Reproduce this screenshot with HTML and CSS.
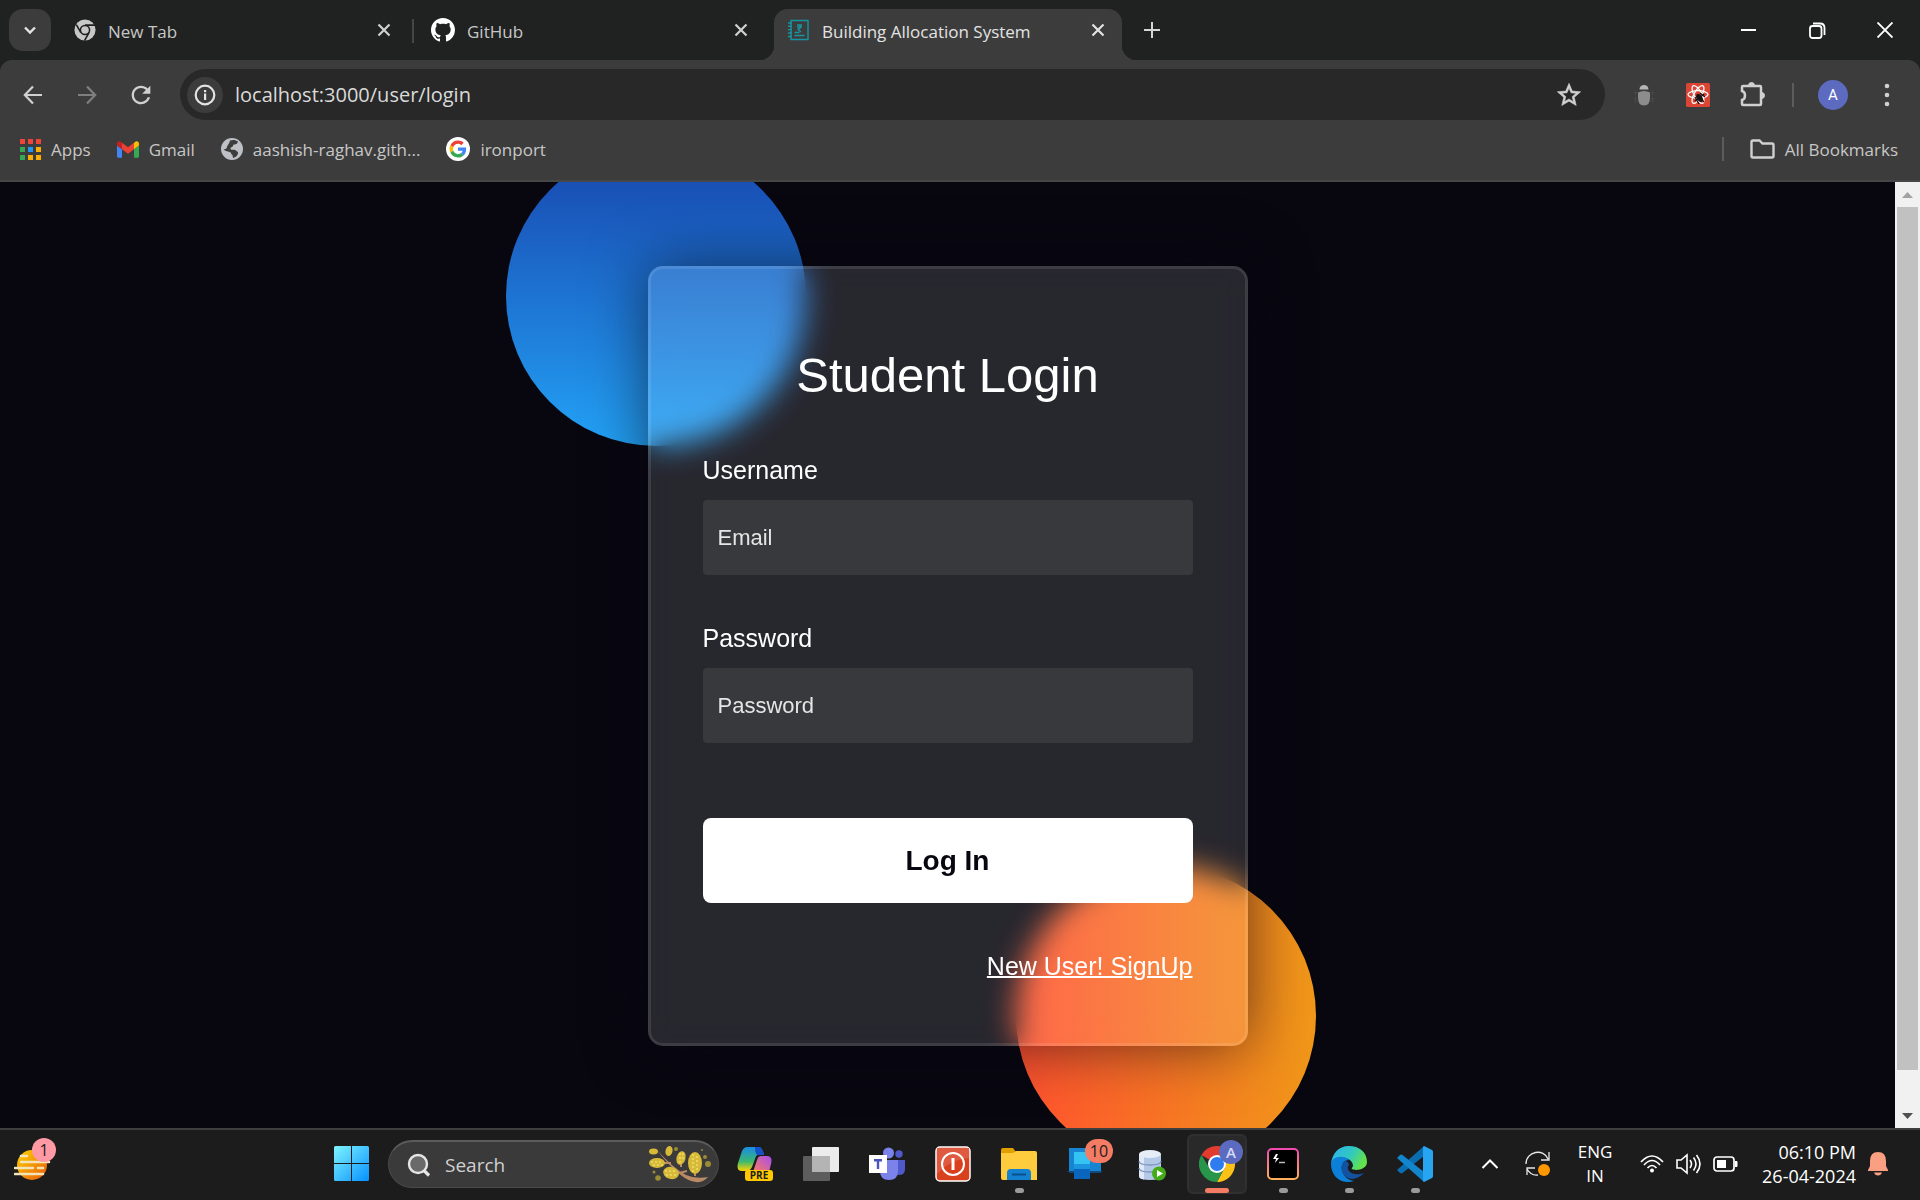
FILE: index.html
```html
<!DOCTYPE html>
<html lang="en">
<head>
<meta charset="utf-8">
<title>Building Allocation System</title>
<link rel="stylesheet" href="styles.css">
</head>
<body>
<div class="desktop">
  <header class="browser">
    <div class="tab-strip">
      <button class="tab-search" aria-label="Search tabs"><svg width="18" height="18" viewBox="0 0 18 18" fill="none" stroke="#e3e3e3" stroke-width="2.400"><path d="M4 6.500l5 5 5-5"/></svg></button>
      <div class="tab">
        <svg width="22" height="22" viewBox="0 0 24 24"><circle cx="12" cy="12" r="11.500" fill="#c7c7c7"/><circle cx="12" cy="12" r="5" fill="none" stroke="#202221" stroke-width="1.700"/><path d="M12 6.700h11M7.500 14.800L2.500 6.200M16.500 14.600L11.500 23.500" stroke="#202221" stroke-width="1.800"/></svg>
        <span class="tab-title">New Tab</span>
        <button class="icon-button close" aria-label="Close New Tab"><svg width="14" height="14" viewBox="0 0 14 14" stroke="#d0d0d0" stroke-width="2.200"><path d="M1.500 1.500l11 11M12.500 1.500l-11 11"/></svg></button>
      </div>
      <div class="tab divided">
        <svg width="24" height="24" viewBox="0 0 16 16" fill="#fff"><path d="M8 0C3.580 0 0 3.580 0 8c0 3.540 2.290 6.530 5.470 7.590.4.070.55-.17.55-.38 0-.19-.01-.82-.01-1.490-2.010.37-2.530-.49-2.690-.94-.09-.23-.48-.94-.82-1.130-.28-.15-.68-.52-.01-.53.63-.01 1.080.58 1.230.82.72 1.210 1.870.87 2.330.66.07-.52.28-.87.51-1.070-1.780-.2-3.640-.89-3.640-3.950 0-.87.31-1.590.82-2.150-.08-.2-.36-1.020.08-2.120 0 0 .67-.21 2.200.82.64-.18 1.320-.27 2-.27s1.360.09 2 .27c1.530-1.040 2.200-.82 2.200-.82.44 1.100.16 1.920.08 2.120.51.56.82 1.270.82 2.150 0 3.070-1.870 3.750-3.650 3.950.29.25.54.73.54 1.480 0 1.070-.01 1.930-.01 2.200 0 .21.15.46.55.38A8.010 8.010 0 0 0 16 8c0-4.420-3.580-8-8-8z"/></svg>
        <span class="tab-title">GitHub</span>
        <button class="icon-button close" aria-label="Close GitHub"><svg width="14" height="14" viewBox="0 0 14 14" stroke="#d0d0d0" stroke-width="2.200"><path d="M1.500 1.500l11 11M12.500 1.500l-11 11"/></svg></button>
      </div>
      <div class="tab active">
        <svg width="22" height="22" viewBox="0 0 22 22" fill="none" stroke="#1695a0" stroke-width="1.400"><path d="M3 1.500h17v19H3z"/><path d="M0 4h4M0 7.300h4M0 10.600h4M0 14h4M0 17.500h4M9 6h5M9 8h5M10 10c3 0 3-4 1-4M9.500 10l3.500 3M6.500 13.500h5M6.500 16.500h10"/></svg>
        <span class="tab-title">Building Allocation System</span>
        <button class="icon-button close" aria-label="Close Building Allocation System"><svg width="14" height="14" viewBox="0 0 14 14" stroke="#e3e3e3" stroke-width="2.200"><path d="M1.500 1.500l11 11M12.500 1.500l-11 11"/></svg></button>
      </div>
      <button class="new-tab icon-button" aria-label="New tab"><svg width="16" height="16" viewBox="0 0 16 16" stroke="#d5d5d5" stroke-width="2"><path d="M8 0v16M0 8h16"/></svg></button>
      <div class="window-controls">
        <button class="icon-button" aria-label="Minimize"><svg width="16" height="16" viewBox="0 0 16 16"><path d="M0 7h15v2H0z" fill="#fff"/></svg></button>
        <button class="icon-button" aria-label="Restore"><svg width="17" height="17" viewBox="0 0 17 17" fill="none" stroke="#fff" stroke-width="1.800"><rect x="1" y="4" width="11.500" height="12" rx="2.500"/><path d="M4 1.500h7c3 0 4.500 1.500 4.500 4.500v7"/></svg></button>
        <button class="icon-button" aria-label="Close window"><svg width="16" height="16" viewBox="0 0 16 16" stroke="#fff" stroke-width="1.900"><path d="M.5.500l15 15M15.500.500l-15 15"/></svg></button>
      </div>
    </div>
    <div class="chrome-body">
      <div class="toolbar">
        <button class="tool" aria-label="Back"><svg width="20" height="20" viewBox="0 0 20 20" fill="none" stroke="#d0d0d0" stroke-width="2.200"><path d="M19 10H2M10 1.500L1.800 10l8.200 8.500"/></svg></button>
        <button class="tool" aria-label="Forward"><svg width="20" height="20" viewBox="0 0 20 20" fill="none" stroke="#7f7f7f" stroke-width="2.200"><path d="M1 10h17M10 1.500l8.200 8.500-8.200 8.500"/></svg></button>
        <button class="tool" aria-label="Reload"><svg width="28" height="28" viewBox="0 0 24 24" fill="#d0d0d0"><path d="M17.650 6.350C16.200 4.900 14.210 4 12 4c-4.420 0-7.990 3.580-7.990 8s3.570 8 7.990 8c3.730 0 6.840-2.550 7.730-6h-2.080c-.82 2.330-3.040 4-5.650 4-3.310 0-6-2.690-6-6s2.690-6 6-6c1.660 0 3.140.69 4.220 1.780L13 11h7V4l-2.350 2.350z"/></svg></button>
        <div class="omnibox">
          <button class="site-info" aria-label="View site information"><svg width="22" height="22" viewBox="0 0 22 22"><circle cx="11" cy="11" r="9.300" fill="none" stroke="#e3e3e3" stroke-width="2.200"/><path d="M10 9.500h2.200V16H10zM10 6h2.200v2.200H10z" fill="#e3e3e3"/></svg></button>
          <input class="address" type="text" aria-label="Address" value="localhost:3000/user/login">
          <button class="icon-button" aria-label="Bookmark this tab"><svg width="28" height="28" viewBox="0 0 24 24" fill="#d0d0d0" stroke="#d0d0d0" stroke-width=".5"><path d="M22 9.240l-7.190-.62L12 2 9.190 8.630 2 9.240l5.460 4.730L5.820 21 12 17.270 18.180 21l-1.630-7.030L22 9.240zM12 15.400l-3.760 2.270 1-4.280-3.320-2.880 4.380-.38L12 6.100l1.710 4.040 4.380.38-3.320 2.880 1 4.280L12 15.400z"/></svg></button>
        </div>
        <button class="tool" aria-label="Debugger extension"><svg width="22" height="24" viewBox="0 0 22 24"><path d="M6.500 6.500a4.500 4.500 0 0 1 9 0z" fill="#b5b5b5"/><path d="M5 9.500q6-3 12 0v5q0 8-6 8t-6-8z" fill="#8c8c8c"/><path d="M2.500 9v3M2.500 15v4M19.500 9v3M19.500 15v4" stroke="#5c5c5c" stroke-width="1.500" stroke-dasharray="1 1.500"/></svg></button>
        <button class="tool" aria-label="React developer tools"><svg width="24" height="24" viewBox="0 0 24 24"><rect width="24" height="24" rx="1.500" fill="#dc4433"/><g fill="none" stroke="#fff" stroke-width="1.300"><ellipse cx="12" cy="11.500" rx="10" ry="3.800"/><ellipse cx="12" cy="11.500" rx="10" ry="3.800" transform="rotate(60 12 11.500)"/><ellipse cx="12" cy="11.500" rx="10" ry="3.800" transform="rotate(120 12 11.500)"/></g><path d="M11 11l7 8M9 14l4 7M14 10l5 4M9 18l9-7" stroke="#1c1414" stroke-width="1.300"/><ellipse cx="13.500" cy="15" rx="2.800" ry="4.200" transform="rotate(-35 13.500 15)" fill="#1c1414"/></svg></button>
        <button class="tool" aria-label="Extensions"><svg width="26" height="26" viewBox="0 0 26 26" fill="none" stroke="#d0d0d0" stroke-width="2.500"><path d="M4 4h17q1 0 1 1v17q0 1-1 1H4q-1 0-1-1v-4c4-1 4-8 0-9V5q0-1 1-1z"/><path d="M9.500 3.500a3 3 0 0 1 6 0zM22.500 10.500a3 3 0 0 1 0 6z" fill="#d0d0d0" stroke-width="1"/></svg></button>
        <span class="rule"></span>
        <button class="tool" aria-label="Profile"><span class="avatar">A</span></button>
        <button class="tool" aria-label="Menu"><svg width="6" height="26" viewBox="0 0 6 26" fill="#d0d0d0"><circle cx="3" cy="4" r="2.300"/><circle cx="3" cy="13" r="2.300"/><circle cx="3" cy="22" r="2.300"/></svg></button>
      </div>
      <nav class="bookmarks">
        <a href="#apps"><svg width="21" height="21" viewBox="0 0 21 21"><path d="M0 0h5v5H0zM8 0h5v5H8zM16 0h5v5h-5z" fill="#f04438"/><path d="M0 8h5v5H0zM0 16h5v5H0z" fill="#34a853"/><path d="M8 8h5v5H8z" fill="#2196f3"/><path d="M16 8h5v5h-5zM8 16h5v5H8zM16 16h5v5h-5z" fill="#fbaf05"/></svg>Apps</a>
        <a href="#gmail"><svg width="22" height="17" viewBox="52 42 88 66"><path fill="#4285f4" d="M58 108h14V74L52 59v43c0 3.320 2.690 6 6 6"/><path fill="#34a853" d="M120 108h14c3.320 0 6-2.690 6-6V59l-20 15"/><path fill="#fbbc04" d="M120 48v26l20-15v-8c0-7.420-8.470-11.650-14.400-7.200"/><path fill="#ea4335" d="M72 74V48l24 18 24-18v26L96 92"/><path fill="#c5221f" d="M52 51v8l20 15V48l-5.600-4.200c-5.940-4.450-14.400-.22-14.400 7.200"/></svg>Gmail</a>
        <a href="#site"><svg width="22" height="22" viewBox="0 0 22 22"><circle cx="11" cy="11" r="11" fill="#bdc1c6"/><path d="M9 2.500c3-1 6-.5 8 1-.5 2-1.500 3-3.500 3s-1 2-2.500 2.500-2 1.500-1 2.500 4-.5 5 1 2.500 1 2 3-2 4-5 4.500l-.5-3c-1.500-.5-1-2.500-3-3S3.500 13 2.500 11c1.500.5 3 0 3.500-2s2-2.500 3-6.500z" fill="#3c3c3c"/></svg>aashish-raghav.gith...</a>
        <a href="#ironport"><svg width="24" height="24" viewBox="0 0 24 24"><circle cx="12" cy="12" r="12" fill="#fff"/><g transform="translate(3.500 3.500) scale(.354)"><path fill="#ea4335" d="M24 9.500c3.540 0 6.710 1.220 9.210 3.600l6.850-6.850C35.900 2.380 30.470 0 24 0 14.620 0 6.510 5.380 2.560 13.220l7.980 6.190C12.430 13.720 17.740 9.500 24 9.500z"/><path fill="#4285f4" d="M46.980 24.550c0-1.570-.15-3.090-.38-4.550H24v9.020h12.940c-.58 2.960-2.260 5.480-4.780 7.180l7.730 6c4.510-4.180 7.090-10.360 7.090-17.650z"/><path fill="#fbbc05" d="M10.530 28.590c-.48-1.450-.76-2.990-.76-4.590s.27-3.140.76-4.590l-7.980-6.190C.92 16.460 0 20.120 0 24c0 3.880.92 7.540 2.560 10.780l7.970-6.190z"/><path fill="#34a853" d="M24 48c6.480 0 11.930-2.130 15.890-5.810l-7.730-6c-2.150 1.450-4.920 2.300-8.160 2.300-6.260 0-11.570-4.220-13.470-9.910l-7.980 6.190C6.510 42.620 14.620 48 24 48z"/></g></svg>ironport</a>
        <span class="rule push"></span>
        <a href="#bookmarks"><svg width="25" height="20" viewBox="0 0 25 20" fill="none" stroke="#d0d0d0" stroke-width="2.400"><path d="M3 1.500h6.500l3 3H22q1.500 0 1.500 1.500v11q0 1.500-1.500 1.500H3q-1.500 0-1.500-1.500V3Q1.500 1.500 3 1.500z"/></svg>All Bookmarks</a>
      </nav>
    </div>
  </header>

  <div class="viewport">
    <main class="page">
      <div class="stage">
        <div class="shape blue"></div>
        <div class="shape orange"></div>
        <form class="login">
          <h1>Student Login</h1>
          <label for="username">Username</label>
          <input id="username" type="text" placeholder="Email">
          <label for="password">Password</label>
          <input id="password" type="password" placeholder="Password">
          <button type="button">Log In</button>
          <a href="#signup">New User! SignUp</a>
        </form>
      </div>
    </main>
    <div class="scrollbar">
      <svg width="25" height="25" viewBox="0 0 25 25"><path d="M7 16h11l-5.500-6z" fill="#a3a3a3"/></svg>
      <div class="thumb"></div>
      <div class="track-rest"></div>
      <svg width="25" height="25" viewBox="0 0 25 25"><path d="M7 10h11l-5.500 6z" fill="#505050"/></svg>
    </div>
  </div>

  <footer class="taskbar">
    <button class="widgets" aria-label="Widgets"><svg width="38" height="34" viewBox="0 0 38 34"><defs><linearGradient id="sun" x1="0" y1="0" x2="1" y2="1"><stop offset="0" stop-color="#ffd400"/><stop offset="1" stop-color="#e8590c"/></linearGradient></defs><circle cx="18" cy="17" r="15" fill="url(#sun)"/><path d="M7 8h6M7 14h28M1 20h18M24 20h5M1 26h28" stroke="#f5e3b8" stroke-width="2.600" stroke-linecap="round"/></svg><span class="badge pink">1</span></button>
    <div class="dock">
      <button class="app" aria-label="Start"><svg width="36" height="36" viewBox="0 0 36 36"><defs><linearGradient id="win" x1="0" y1="0" x2="1" y2="1"><stop offset="0" stop-color="#7ff5ff"/><stop offset="1" stop-color="#0690ff"/></linearGradient></defs><path d="M1.500 0H17v17H0V1.500Q0 0 1.500 0zM18 0h15.500Q35 0 35 1.500V17H18zM0 18h17v17H1.500Q0 35 0 33.500zM18 18h17v15.500q0 1.500-1.500 1.500H18z" fill="url(#win)"/></svg></button>
      <label class="search">
        <svg width="24" height="24" viewBox="0 0 24 24" fill="#6a6a6a" stroke="#e6e6e6" stroke-width="2.400"><path d="M16.500 17l5.500 5.500" stroke-width="3.200"/><circle cx="11" cy="11" r="9"/></svg>
        <input type="text" placeholder="Search" aria-label="Search">
        <svg width="62" height="38" viewBox="0 0 62 38"><path d="M8 4Q24 22 37 29q9 4 22 2-5 6-12 5-8-1-14-6Q20 20 8 4z" fill="#b98a64"/><path d="M14 17h8M30 27l8-2M32 21v-5M46 30v-5" stroke="#b98a64" stroke-width="2"/><g fill="#d6ba38"><ellipse cx="4.500" cy="5.500" rx="4.500" ry="3"/><ellipse cx="20" cy="5" rx="3.500" ry="5" transform="rotate(12 20 5)"/><ellipse cx="8" cy="17" rx="8" ry="5"/><ellipse cx="22" cy="27" rx="8" ry="6" transform="rotate(15 22 27)"/><ellipse cx="32" cy="12" rx="4.500" ry="7" transform="rotate(15 32 12)"/><ellipse cx="46" cy="17" rx="7" ry="11"/></g><g fill="none" stroke="#ecd968" stroke-width="2.200" stroke-linecap="round" stroke-dasharray="0 4"><path d="M3 16h12M5 19h9M17 25h12M18 29h9M44 9v17M48 11v16M31 8v10M34 8v8"/></g><g fill="#9b8b35"><circle cx="27" cy="3" r="2"/><circle cx="59" cy="18" r="3"/><circle cx="56" cy="11" r="2"/><circle cx="9" cy="32" r="2.800"/><circle cx="5" cy="26" r="1.500"/><circle cx="53" cy="4" r="1"/></g></svg>
      </label>
      <button class="app" aria-label="Copilot"><svg width="36" height="36" viewBox="0 0 36 36"><defs><linearGradient id="cpa" x1="0" y1="0" x2="0" y2="1"><stop offset="0" stop-color="#1a8be8"/><stop offset=".6" stop-color="#3ab870"/><stop offset="1" stop-color="#ffd400"/></linearGradient><linearGradient id="cpb" x1="1" y1="0" x2="0" y2="1"><stop offset="0" stop-color="#a44ff0"/><stop offset="1" stop-color="#ff7a5c"/></linearGradient></defs><path d="M10 1h12q3 0 5 8h-6q-2 0-3 4l-3 8q-2 4-5 4H5q-6 0-4-8L5 5q2-4 5-4z" fill="url(#cpa)"/><path d="M18 1h4q3 0 5 8h-6q-3 0-3-8z" fill="#1550c8"/><path d="M24 10h6q6 0 4 8l-2 8H16l4-12q1-4 4-4z" fill="url(#cpb)"/><rect x="8" y="24" width="28" height="11" rx="3" fill="#ffc800"/><text x="22" y="33" text-anchor="middle" class="pre">PRE</text></svg></button>
      <button class="app" aria-label="Task view"><svg width="36" height="36" viewBox="0 0 36 36"><rect x="9" y="1" width="27" height="25" rx="1" fill="#ececec"/><rect x="0" y="10" width="27" height="25" rx="1" fill="#5d5d5d"/><path d="M9 10h18v16H9z" fill="#b4b4b4"/></svg></button>
      <button class="app" aria-label="Teams"><svg width="36" height="36" viewBox="0 0 36 36"><circle cx="19.500" cy="7" r="5.500" fill="#7b83eb"/><circle cx="30" cy="8" r="3.700" fill="#5059c9"/><path d="M26 14h10v9q0 6-6 6-4 0-4-4z" fill="#5059c9"/><path d="M11 14h18v11q0 9-9 9t-9-9z" fill="#7b83eb"/><path d="M0 9h18v18H0z" fill="#fff"/><path d="M5 13h8v2.400h-2.800V23H7.800v-7.600H5z" fill="#4b53bc"/></svg></button>
      <button class="app" aria-label="Power"><svg width="36" height="36" viewBox="0 0 36 36"><rect x="1" y="1" width="34" height="34" rx="4" fill="#d9411e" stroke="#fff" stroke-width="1.500"/><path d="M2 2h32v10Q16 13 2 28z" fill="#e06048" opacity=".8"/><circle cx="18" cy="18" r="11" fill="none" stroke="#fff" stroke-width="2"/><path d="M16.500 12h3v12h-3z" fill="#fff"/></svg></button>
      <button class="app open" aria-label="File Explorer"><svg width="36" height="36" viewBox="0 0 36 36"><path d="M0 4q0-2 2-2h10l3 4v6H0z" fill="#e0a000"/><path d="M0 7h12l3-2h19q2 0 2 2v27H2q-2 0-2-2z" fill="#ffcc3d"/><path d="M6 34v-7q0-4 4-4h16q4 0 4 4v7z" fill="#1480d0"/><path d="M11 28.500h14" stroke="#0b4f8c" stroke-width="2"/></svg></button>
      <button class="app" aria-label="Phone Link"><svg width="36" height="36" viewBox="0 0 36 36"><path d="M2 2h32v23H2z" fill="#1684d0"/><path d="M0 25h36l-3 2H3z" fill="#114a80"/><path d="M7 6h16v27H7z" fill="#0a66bd"/><path d="M7 6h16v12H7z" fill="#35c3f3"/><path d="M7 18h16v5H7z" fill="#1b95e0"/></svg><span class="badge coral">10</span></button>
      <button class="app" aria-label="SQL Developer"><svg width="36" height="36" viewBox="0 0 36 36"><path d="M6 8v22q0 4 11 4t11-4V8z" fill="#b4c9e8"/><path d="M6 8v22q0 3 5 3.500V11z" fill="#dfe9f7"/><path d="M6 15q0 4 11 4t11-4M6 22q0 4 11 4t11-4" fill="none" stroke="#7d96bd" stroke-width="1.300"/><ellipse cx="17" cy="8" rx="11" ry="4" fill="#e6edf7"/><circle cx="26" cy="27.500" r="7" fill="#44ac18"/><path d="M24 24v7l6-3.500z" fill="#fff"/></svg></button>
      <button class="app current" aria-label="Chrome"><svg width="36" height="36" viewBox="0 0 36 36"><path d="M18 18L2.400 9A18 18 0 0 1 33.600 9z" fill="#e33b2e"/><path d="M18 9.500h15.900A18 18 0 0 1 18 36l7.500-14z" fill="#fbc116"/><path d="M10.600 22.200L2.400 9A18 18 0 0 0 18 36l7.400-13.800z" fill="#27964a"/><circle cx="18" cy="18" r="9" fill="#fff"/><circle cx="18" cy="18" r="7" fill="#2e7cf0"/></svg><span class="badge person">A</span></button>
      <button class="app open" aria-label="Terminal"><svg width="34" height="34" viewBox="0 0 34 34"><defs><linearGradient id="trm" x1="0" y1="0" x2="0" y2="1"><stop offset="0" stop-color="#f04bb0"/><stop offset="1" stop-color="#ffb05a"/></linearGradient></defs><rect x="2" y="2" width="30" height="30" rx="4" fill="#000" stroke="url(#trm)" stroke-width="2"/><path d="M10 7l-3 5h3l-1 4 4-5h-3l2-4z" fill="#fff"/><path d="M13 15.500h6" stroke="#bbb" stroke-width="1.500"/></svg></button>
      <button class="app open" aria-label="Edge"><svg width="36" height="36" viewBox="0 0 36 36"><defs><linearGradient id="eda" x1="0" y1="0" x2="1" y2=".4"><stop offset="0" stop-color="#2cb0f0"/><stop offset=".6" stop-color="#31c8c0"/><stop offset="1" stop-color="#62e24c"/></linearGradient></defs><path d="M0 18C2 14 8 11 14 12c5 1 8 4 8 8 0 1-2 2-1 3 3 2 15 1 15-7C36 6 28 0 18 0 7 0 1 8 0 18z" fill="url(#eda)"/><path d="M0 18c0-7 12-10 18-4-5 0-8 4-7 10 1 6 6 10 12 11-12 4-23-4-23-17z" fill="#0c7fd8"/><path d="M14 15c-4 3-5 9-1 14 4 5 12 6 20-2-5 2-12 2-15-2-2-3-1-5 0-6 0-2-2-4-4-4z" fill="#1252a0"/></svg></button>
      <button class="app open" aria-label="Visual Studio Code"><svg width="36" height="36" viewBox="0 0 36 36"><path d="M27 0L0 24l3 3q1 .8 2.500 0L27 10z" fill="#0a6db0"/><path d="M27 36L0 12l3-3q1-.8 2.500 0L27 26z" fill="#1285cc"/><path d="M27 0l8 4q1 .5 1 2v24q0 1.500-1 2l-8 4q-1-.5-1-2V2q0-1.500 1-2z" fill="#28a5f0"/></svg></button>
    </div>
    <div class="tray">
      <button class="icon-button" aria-label="Show hidden icons"><svg width="18" height="18" viewBox="0 0 18 18" fill="none" stroke="#fff" stroke-width="2"><path d="M1.500 13L9 5.500l7.500 7.500"/></svg></button>
      <button class="icon-button" aria-label="Update"><svg width="26" height="26" viewBox="0 0 26 26" fill="none" stroke="#e8e8e8" stroke-width="1.300"><path d="M1 13C1 0 19-3 23 8M24 1v8h-8M2 24v-7h8M2 18q4 7 11 6"/><circle cx="19" cy="19" r="6" fill="#ff9800" stroke="none"/></svg></button>
      <button class="language">ENG<br>IN</button>
      <button class="quick" aria-label="Quick settings">
        <svg width="24" height="20" viewBox="0 0 24 20" fill="none" stroke="#fff" stroke-width="1.700"><path d="M1 8q11-12 22 0M4 11q8-9 16 0M7.500 14q4.500-5 9 0"/><circle cx="12" cy="16.500" r="2" fill="#fff" stroke="none"/></svg>
        <svg width="25" height="22" viewBox="0 0 25 22" fill="none" stroke="#fff" stroke-width="1.600"><path d="M1 7h4l6-5v18l-6-5H1zM14 7q3 4 0 8M17.500 4.500q5 6.500 0 13M20.500 2q7 9 0 18"/></svg>
        <svg width="25" height="18" viewBox="0 0 25 18"><rect x="1" y="2" width="20" height="14" rx="3" fill="none" stroke="#fff" stroke-width="1.700"/><path d="M4 5h9v8H4zM22 6h1.500q1 0 1 1v4q0 1-1 1H22z" fill="#fff"/></svg>
      </button>
      <button class="clock">06:10 PM<br>26-04-2024</button>
      <button class="icon-button bell" aria-label="Notifications"><svg width="20" height="24" viewBox="0 0 20 24" fill="#fa9f82"><path d="M10 0q8 0 8 9v5l2 4v1H0v-1l2-4V9q0-9 8-9zM6 20.500h8Q13 23.500 10 23.500T6 20.500z"/></svg></button>
    </div>
  </footer>
</div>
</body>
</html>
```
FILE: styles.css
```css
*,
*::before,
*::after {
  box-sizing: border-box;
}

body {
  margin: 0;
  background: #080710;
}

button,
input {
  margin: 0;
  padding: 0;
  border: 0;
  background: none;
  color: inherit;
  font: inherit;
  outline: 0;
}

a {
  color: inherit;
}

svg {
  display: block;
  flex: none;
}

.desktop {
  display: flex;
  flex-direction: column;
  min-height: 100vh;
  font-family: "Open Sans", "Noto Sans", sans-serif;
}

/* Browser frame */

.browser {
  background: #202221;
  color: #c7c7c7;
  font-size: 17px;
}

.tab-strip {
  display: flex;
  gap: 9px;
  height: 60px;
  padding: 9px 0 0 9px;
}

.tab-search {
  display: grid;
  place-items: center;
  width: 42px;
  height: 42px;
  border-radius: 14px;
  background: #3c3c3c;
}

.icon-button {
  display: grid;
  place-items: center;
}

.tab {
  position: relative;
  display: flex;
  flex: 0 1 348px;
  align-items: center;
  gap: 12px;
  padding: 0 14px 9px;
}

.tab-title {
  flex: 1;
  padding-top: 2px;
  white-space: nowrap;
}

.close {
  width: 20px;
  height: 20px;
}

.divided::before {
  position: absolute;
  top: 10px;
  left: -5px;
  width: 2px;
  height: 24px;
  background: #454746;
  content: "";
}

.active {
  border-radius: 14px 14px 0 0;
  background: #3c3c3c;
  color: #e3e3e3;
}

.active::before,
.active::after {
  position: absolute;
  bottom: 0;
  width: 14px;
  height: 14px;
  content: "";
}

.active::before {
  right: 100%;
  background: radial-gradient(circle at 0 0, transparent 14px, #3c3c3c 14px);
}

.active::after {
  left: 100%;
  background: radial-gradient(circle at 100% 0, transparent 14px, #3c3c3c 14px);
}

.new-tab {
  width: 42px;
  height: 42px;
}

.window-controls {
  display: grid;
  grid-template-columns: repeat(3, 68px);
  height: 42px;
  margin-left: auto;
  padding-right: 1px;
}

.chrome-body {
  border-bottom: 2px solid #464646;
  border-radius: 12px 12px 0 0;
  background: #3c3c3c;
}

.toolbar {
  display: flex;
  align-items: center;
  padding: 9px 6px 0;
}

.tool {
  display: grid;
  place-items: center;
  width: 54px;
  height: 51px;
}

.omnibox {
  display: flex;
  flex: 1;
  align-items: center;
  gap: 12px;
  height: 51px;
  margin: 0 12px;
  padding: 0 22px 0 7px;
  border-radius: 26px;
  background: #282828;
}

.site-info {
  display: grid;
  place-items: center;
  width: 36px;
  height: 36px;
  border-radius: 50%;
  background: #3c3c3c;
}

.address {
  flex: 1;
  min-width: 0;
  color: #dadada;
  font-size: 20px;
}

.rule {
  width: 27px;
  height: 24px;
  background: linear-gradient(#5c5c5c, #5c5c5c) center / 2px 100% no-repeat;
}

.avatar {
  display: grid;
  place-items: center;
  width: 30px;
  height: 30px;
  border-radius: 50%;
  background: #5c6bc0;
  color: #fff;
  font: 15px Roboto, sans-serif;
}

.bookmarks {
  display: flex;
  align-items: center;
  gap: 26px;
  height: 60px;
  padding: 0 22px 2px 20px;
}

.bookmarks a {
  display: flex;
  align-items: center;
  gap: 10px;
  text-decoration: none;
  white-space: nowrap;
}

.push {
  width: 2px;
  margin-left: auto;
}

/* Login page */

.viewport {
  display: flex;
  flex: 1;
}

.page {
  display: grid;
  flex: 1;
  place-items: center;
  overflow: hidden;
  background: #080710;
  font-family: "Liberation Sans", Arial, sans-serif;
}

.stage {
  position: relative;
  width: 600px;
  max-width: 100%;
  margin: 26px 0 24px;
}

.shape {
  position: absolute;
  width: 300px;
  height: 300px;
  border-radius: 50%;
}

.blue {
  top: -120px;
  left: -142px;
  background: linear-gradient(#1845ad, #23a2f6);
}

.orange {
  right: -68px;
  bottom: -120px;
  background: linear-gradient(to right, #ff512f, #f09819);
}

.login {
  position: relative;
  display: flex;
  flex-direction: column;
  padding: 75px 52px 59px;
  border: 3px solid rgba(255, 255, 255, 0.1);
  border-radius: 15px;
  background: rgba(255, 255, 255, 0.13);
  box-shadow: 0 0 60px rgba(8, 7, 16, 0.6);
  backdrop-filter: blur(15px);
  color: #fff;
  font-size: 25px;
  line-height: 36px;
}

.login h1 {
  margin: 0;
  font-size: 49px;
  font-weight: 400;
  line-height: 63px;
  text-align: center;
}

.login label {
  margin-top: 45px;
}

.login input {
  height: 75px;
  margin-top: 12px;
  padding: 0 15px;
  border-radius: 4px;
  background: #38393c;
  font-size: 22px;
}

.login input::placeholder {
  color: #e5e5e5;
}

.login button {
  height: 85px;
  margin: 75px 0 45px;
  border-radius: 8px;
  background: #fff;
  color: #080710;
  font-size: 28px;
  font-weight: 700;
}

.login a {
  align-self: flex-end;
  text-decoration-thickness: 2px;
}

.scrollbar {
  display: flex;
  flex-direction: column;
  width: 25px;
  background: #f1f1f1;
}

.thumb {
  flex: 863;
  margin: 0 2px;
  background: #c1c1c1;
}

.track-rest {
  flex: 33;
}

/* Taskbar */

.taskbar {
  display: flex;
  align-items: center;
  height: 72px;
  padding: 0 32px 2px 14px;
  border-top: 2px solid #3f3f3f;
  background: #1c1c1c;
  color: #fff;
}

.widgets {
  position: relative;
  width: 48px;
  height: 36px;
}

.widgets svg {
  margin-top: 2px;
}

.badge {
  position: absolute;
  display: grid;
  place-items: center;
  height: 24px;
  border-radius: 12px;
  color: #1c1c1c;
  font-size: 16px;
}

.pink {
  top: -8px;
  left: 18px;
  width: 24px;
  background: #ff99a4;
}

.coral {
  top: 5px;
  right: 2px;
  width: 28px;
  background: #f47c64;
}

.person {
  top: 4px;
  right: 2px;
  width: 24px;
  background: #5c6bc0;
  color: #d5daf5;
  font-size: 15px;
  font-weight: 600;
}

.dock {
  display: flex;
  align-items: center;
  gap: 6px;
  margin-left: 260px;
}

.app {
  position: relative;
  display: grid;
  place-items: center;
  width: 60px;
  height: 60px;
  border-radius: 6px;
}

.app.current {
  border: 2px solid #303030;
  background: #292929;
}

.app.open::after,
.app.current::after {
  position: absolute;
  bottom: 1px;
  left: 50%;
  width: 9px;
  height: 5px;
  margin-left: -4px;
  border-radius: 3px;
  background: #9a9a9a;
  content: "";
}

.app.current::after {
  bottom: -1px;
  width: 24px;
  margin-left: -12px;
  background: #f47c64;
}

.pre {
  fill: #1c1c1c;
  font: 700 10px "Open Sans", sans-serif;
}

.search {
  display: flex;
  align-items: center;
  gap: 14px;
  width: 331px;
  height: 48px;
  padding: 0 7px 0 18px;
  border: 1px solid #4a4a4a;
  border-top: 2px solid #5c5c5c;
  border-radius: 24px;
  background: #3a3a3a;
}

.search input {
  flex: 1;
  min-width: 0;
  font-size: 19px;
}

.search input::placeholder {
  color: #d0d0d0;
}

.tray {
  display: flex;
  align-items: center;
  gap: 12px;
  margin-left: auto;
  font-size: 17px;
  line-height: 24px;
}

.tray .icon-button {
  width: 36px;
  height: 48px;
}

.tray .bell {
  width: 20px;
}

.language {
  width: 54px;
}

.quick {
  display: flex;
  align-items: center;
  gap: 12px;
  margin: 0 12px 0 6px;
}

.clock {
  font-size: 18px;
  text-align: right;
}
```
